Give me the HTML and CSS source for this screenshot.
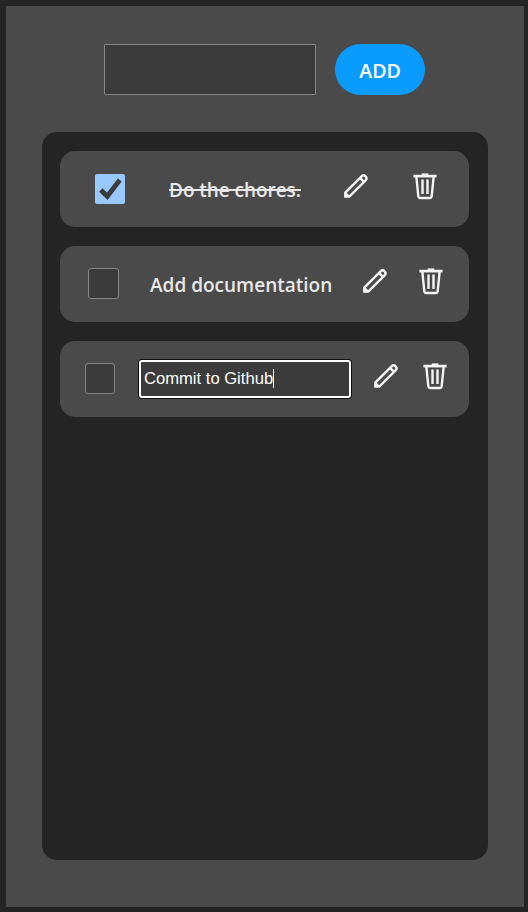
FILE: index.html
```
<!DOCTYPE html>
<html lang="en">
<head>
<meta charset="utf-8">
<title>To-do</title>
<link rel="stylesheet" href="styles.css">
</head>
<body>
<svg width="0" height="0" class="sprite" aria-hidden="true">
  <symbol id="pencil" viewBox="0 0 26 26">
    <path d="M2.3 23.6V19.6L18.6 3.3Q20.6 1.3 22.6 3.3Q24.6 5.3 22.6 7.3L6.3 23.6Z"/>
    <path d="M17 4.9L21 8.9"/>
    <path d="M2.6 20.3L5.6 23.3"/>
  </symbol>
  <symbol id="trash" viewBox="0 0 26 27">
    <path class="lid" d="M1.4 3.1H24.6"/>
    <path d="M9.7 1.6H16.3"/>
    <path d="M4.3 3.1L6.3 23Q6.5 25 8.2 25H17.8Q19.5 25 19.7 23L21.7 3.1"/>
    <path d="M10.5 6.6V21M15.5 6.6V21"/>
  </symbol>
</svg>
<main class="app">
  <form class="entry">
    <input class="entry-input" type="text" aria-label="New task">
    <button class="add" type="button">ADD</button>
  </form>
  <ul class="list">
    <li class="item item-done">
      <span class="check checked"><svg viewBox="0 0 30 31"><path d="M5.8 16L12.3 22.3L24.8 6"/></svg></span>
      <span class="label">Do the chores.</span>
      <svg class="pencil"><use href="#pencil"/></svg>
      <svg class="trash"><use href="#trash"/></svg>
    </li>
    <li class="item item-open">
      <span class="check"></span>
      <span class="label">Add documentation</span>
      <svg class="pencil"><use href="#pencil"/></svg>
      <svg class="trash"><use href="#trash"/></svg>
    </li>
    <li class="item item-editing">
      <span class="check"></span>
      <div class="edit"><span class="value">Commit to Github</span></div>
      <svg class="pencil"><use href="#pencil"/></svg>
      <svg class="trash"><use href="#trash"/></svg>
    </li>
  </ul>
</main>
</body>
</html>
```
FILE: styles.css
```
* { box-sizing: border-box; }
body {
  margin: 0;
  height: 912px;
  padding: 6px 4px 5px 6px;
  background: #242424;
  color: #e8e8e8;
  font-family: "Open Sans", sans-serif;
}
.sprite { display: none; }
.app {
  height: 901px;
  padding: 38px 36px 47px;
  background: #4a4a4a;
}
.entry {
  display: flex;
  gap: 19px;
  margin: 0 0 37px 62px;
}
.entry-input {
  width: 212px;
  height: 51px;
  border: 1px solid #858585;
  border-radius: 1px;
  background: #3b3b3b;
  color: #fff;
}
.add {
  width: 90px;
  height: 51px;
  padding: 1px 0 0;
  border: 0;
  border-radius: 26px;
  background: #0a9bff;
  color: #fff;
  font: 650 19.5px "Open Sans", sans-serif;
}
.list {
  display: flex;
  flex-direction: column;
  gap: 19px;
  height: 728px;
  margin: 0;
  padding: 19px 19px 0 18px;
  border-radius: 15px;
  background: #242424;
  list-style: none;
}
.item {
  display: grid;
  align-items: start;
  height: 76px;
  border-radius: 15px;
  background: #4a4a4a;
}
.item-done { grid-template-columns: 30px 131px 26px 26px; padding-left: 35px; column-gap: 44px; }
.item-open { grid-template-columns: 31px 182px 26px 26px; padding-left: 28px; column-gap: 31px; }
.item-editing { grid-template-columns: 30px 212px 26px 26px; padding-left: 25px; column-gap: 24px; }
.check {
  height: 31px;
  margin-top: 22px;
  border: 1px solid #858585;
  border-radius: 3px;
  background: #3b3b3b;
}
.checked { height: 30px; margin-top: 23px; border: 0; border-radius: 2px; background: #99c8ff; }
.checked svg {
  display: block;
  width: 30px;
  height: 31px;
  fill: none;
  stroke: #3b3b3b;
  stroke-width: 4.8;
}
.label {
  margin-top: 26px;
  font-size: 19px;
  font-weight: 600;
  line-height: 26px;
  white-space: nowrap;
}
.item-done .label { letter-spacing: -0.05px; text-decoration: line-through 2px; }
.pencil, .trash {
  width: 26px;
  height: 26px;
  margin-top: 22px;
  fill: none;
  stroke: #f5f5f5;
  stroke-width: 2.4;
}
.trash { height: 27px; }
.lid { stroke-width: 2.7; }
.item-done .pencil { margin-left: -1.5px; }
.item-done .trash { margin-left: -2px; }
.item-open .pencil { margin-left: -1.5px; }
.item-open .trash { margin-left: -2px; }
.item-editing .pencil { margin-left: -2.5px; }
.item-editing .trash { margin-left: -3px; }
.edit {
  display: flex;
  align-items: center;
  height: 38px;
  margin-top: 19px;
  padding: 0 0 2px 3px;
  border: 2px solid #fff;
  border-radius: 3px;
  background: #3b3b3b;
  box-shadow: 0 0 0 1px #101010;
}
.value {
  border-right: 1px solid #fff;
  color: #fff;
  font: 16.6px/19px "Liberation Sans", Arial, sans-serif;
}
```
